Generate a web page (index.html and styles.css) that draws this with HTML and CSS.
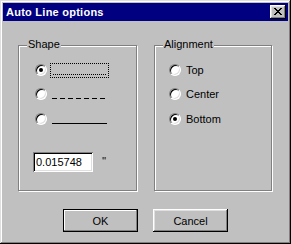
FILE: index.html
```html
<!DOCTYPE html>
<html lang="en">
<head>
    <meta charset="UTF-8">
    <title>Auto Line options</title>
    <link rel="stylesheet" href="styles.css">
</head>
<body>
    <div class="window">
        <div class="titlebar">
            <span class="title">Auto Line options</span>
            <span class="close">
                <svg width="8" height="7" viewBox="0 0 8 7" shape-rendering="crispEdges">
                    <rect x="0" y="0" width="2" height="1"/><rect x="6" y="0" width="2" height="1"/>
                    <rect x="1" y="1" width="2" height="1"/><rect x="5" y="1" width="2" height="1"/>
                    <rect x="2" y="2" width="4" height="1"/>
                    <rect x="3" y="3" width="2" height="1"/>
                    <rect x="2" y="4" width="4" height="1"/>
                    <rect x="1" y="5" width="2" height="1"/><rect x="5" y="5" width="2" height="1"/>
                    <rect x="0" y="6" width="2" height="1"/><rect x="6" y="6" width="2" height="1"/>
                </svg>
            </span>
        </div>
        <div class="content">
            <div class="groups">
                <div class="group shape">
                    <span class="legend">Shape</span>
                    <div class="options">
                        <div class="option"><span class="radio checked"></span><span class="sample focus"><span class="line dotted"></span></span></div>
                        <div class="option"><span class="radio"></span><span class="sample"><span class="line dashed"></span></span></div>
                        <div class="option"><span class="radio"></span><span class="sample"><span class="line solid"></span></span></div>
                    </div>
                    <div class="width-row">
                        <span class="field">0.015748</span>
                        <span class="unit">''</span>
                    </div>
                </div>
                <div class="group align">
                    <span class="legend">Alignment</span>
                    <div class="options">
                        <div class="option"><span class="radio"></span><span class="label">Top</span></div>
                        <div class="option"><span class="radio"></span><span class="label">Center</span></div>
                        <div class="option"><span class="radio checked"></span><span class="label">Bottom</span></div>
                    </div>
                </div>
            </div>
            <div class="buttons">
                <span class="btn default">OK</span>
                <span class="btn">Cancel</span>
            </div>
        </div>
    </div>
</body>
</html>
```

FILE: styles.css
```css
body {
    margin: 0;
    font-family: "Liberation Sans", Arial, sans-serif;
    font-size: 11px;
    color: #000;
    background: #c0c0c0;
}
.window {
    width: 291px;
    height: 244px;
    box-sizing: border-box;
    padding: 3px;
    background: #c0c0c0;
    box-shadow: inset -1px -1px #000, inset 1px 1px #dfdfdf, inset -2px -2px #808080, inset 2px 2px #fff;
}
.titlebar {
    height: 18px;
    background: #000080;
    display: flex;
    align-items: center;
    justify-content: space-between;
    padding: 0 2px 0 3px;
}
.title {
    color: #fff;
    font-weight: bold;
    font-size: 11px;
    letter-spacing: 0.25px;
    line-height: 13px;
}
.close {
    width: 16px;
    height: 14px;
    box-sizing: border-box;
    background: #c0c0c0;
    box-shadow: inset -1px -1px #000, inset 1px 1px #fff, inset -2px -2px #808080, inset 2px 2px #dfdfdf;
    display: flex;
    padding: 3px 0 0 4px;
}
.close svg {
    display: block;
}
.content {
    padding: 24px 0 0 15px;
}
.groups {
    display: flex;
    gap: 17px;
}
.group {
    position: relative;
    height: 146px;
    box-sizing: border-box;
    border: 1px solid #808080;
    box-shadow: inset 1px 1px #fff, 1px 1px #fff;
    padding: 18px 0 0 14px;
}
.shape {
    width: 119px;
}
.align {
    width: 118px;
}
.legend {
    position: absolute;
    top: -8px;
    left: 8px;
    padding: 0 1px;
    background: #c0c0c0;
    line-height: 13px;
}
.options {
    display: flex;
    flex-direction: column;
}
.option {
    display: flex;
    align-items: flex-start;
    height: 12px;
}
.option + .option {
    margin-top: 12px;
}
.option:last-child {
    margin-top: 13px;
}
.shape .options {
    margin-left: 2px;
}
.radio {
    position: relative;
    width: 12px;
    height: 12px;
    flex: none;
    box-sizing: border-box;
    border-radius: 50%;
    background: #fff;
    border: 1px solid;
    border-color: #808080 #fff #fff #808080;
    box-shadow: inset 1px 1px #000, inset -1px -1px #dfdfdf;
}
.radio.checked::after {
    content: "";
    position: absolute;
    left: 3px;
    top: 3px;
    width: 4px;
    height: 4px;
    border-radius: 50%;
    background: #000;
}
.sample {
    margin: -1px 0 0 3px;
    width: 59px;
    height: 15px;
    box-sizing: border-box;
    border: 1px dotted transparent;
    padding: 10px 1px 0 1px;
}
.sample.focus {
    border-color: #000;
}
.line {
    display: block;
    height: 1px;
}
.dotted {
    margin: 0 1px;
    background: repeating-linear-gradient(to right, #000 0 1px, transparent 1px 2px);
}
.dashed {
    background: repeating-linear-gradient(to right, #000 0 5px, transparent 5px 8px);
}
.solid {
    background: #000;
}
.label {
    margin-left: 5px;
    line-height: 12px;
}
.width-row {
    display: flex;
    align-items: center;
    margin-top: 27px;
}
.field {
    width: 60px;
    height: 20px;
    box-sizing: border-box;
    background: #fff;
    box-shadow: inset 1px 1px #808080, inset -1px -1px #fff, inset 2px 2px #000, inset -2px -2px #dfdfdf;
    padding: 3px 0 0 3px;
    line-height: 14px;
}
.unit {
    margin: -3px 0 0 9px;
    color: #000;
}
.buttons {
    display: flex;
    gap: 15px;
    margin: 18px 0 0 45px;
}
.btn {
    width: 75px;
    height: 23px;
    box-sizing: border-box;
    display: flex;
    align-items: center;
    justify-content: center;
    box-shadow: inset -1px -1px #000, inset 1px 1px #fff, inset -2px -2px #808080, inset 2px 2px #dfdfdf;
}
.btn.default {
    border: 1px solid #000;
    box-shadow: inset -1px -1px #808080, inset 1px 1px #fff;
}
```
